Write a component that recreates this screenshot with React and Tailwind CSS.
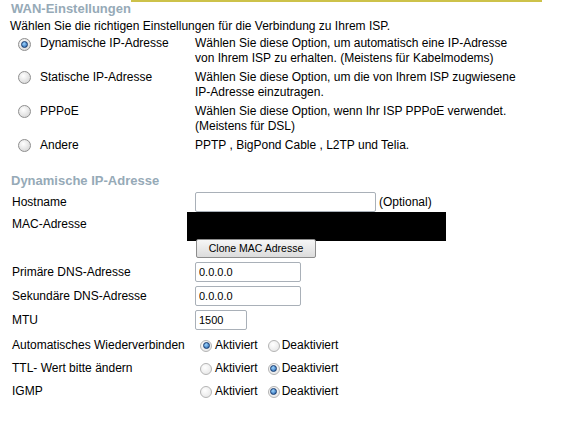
import { useState } from "react";

const FONT = { fontFamily: '"Liberation Sans", Arial, sans-serif' };

function Radio({ checked, small }) {
  return (
    <span
      className={`inline-flex shrink-0 items-center justify-center rounded-full ${
        small
          ? "w-[12px] h-[12px] border border-[#b4b4b4] bg-[radial-gradient(circle_at_40%_35%,#ffffff,#e2e2e2)]"
          : "w-[13px] h-[13px] border border-[#8e8e8e] bg-[radial-gradient(circle_at_40%_35%,#ffffff,#cfcfcf)]"
      }`}
    >
      {checked && (
        <span className="w-[7px] h-[7px] rounded-full border border-[#163a6e] bg-[radial-gradient(circle_at_40%_35%,#9fd6ff,#1b5aa8)]" />
      )}
    </span>
  );
}

const options = [
  {
    label: "Dynamische IP-Adresse",
    desc: ["Wählen Sie diese Option, um automatisch eine IP-Adresse", "von Ihrem ISP zu erhalten. (Meistens für Kabelmodems)"],
  },
  {
    label: "Statische IP-Adresse",
    desc: ["Wählen Sie diese Option, um die von Ihrem ISP zugwiesene", "IP-Adresse einzutragen."],
  },
  {
    label: "PPPoE",
    desc: ["Wählen Sie diese Option, wenn Ihr ISP PPPoE verwendet.", "(Meistens für DSL)"],
  },
  { label: "Andere", desc: ["PPTP , BigPond Cable , L2TP und Telia."] },
];

function Toggle({ label, on }) {
  return (
    <div className="flex items-center h-[23px] pl-[12px]">
      <div className="w-[188px]">{label}</div>
      <Radio small checked={on} />
      <span className="ml-[3px] mr-[10px]">Aktiviert</span>
      <Radio small checked={!on} />
      <span className="ml-[2px]">Deaktiviert</span>
    </div>
  );
}

function TextInput({ w, value }) {
  return (
    <input
      defaultValue={value}
      className={`${w} h-[20px] border border-[#a9b0b8] rounded-[2px] px-[3px] text-[11px] bg-white outline-none`}
      style={FONT}
    />
  );
}

export default function App() {
  const [mode] = useState(0);
  return (
    <div className="w-[571px] h-[438px] bg-white text-[12px] leading-[15px] text-black" style={FONT}>
      <div className="flex items-start w-[542px]">
        <h2 className="pl-[11px] text-[13px] leading-[17px] font-bold text-[#96aab7]">WAN-Einstellungen</h2>
        <div className="flex-1 border-t-2 border-[#cdc24a]" />
      </div>
      <p className="pl-[10px] pt-[2px]">Wählen Sie die richtigen Einstellungen für die Verbindung zu Ihrem ISP.</p>

      {options.map((o, i) => (
        <div key={o.label} className={`flex items-start pl-[18px] ${i === 0 ? "pt-[2px]" : "pt-[4px]"}`}>
          <div className="mt-[1px]">
            <Radio checked={mode === i} />
          </div>
          <div className="ml-[9px] w-[155px]">{o.label}</div>
          <div>
            {o.desc.map((d) => (
              <div key={d}>{d}</div>
            ))}
          </div>
        </div>
      ))}

      <h2 className="mt-[16px] pl-[11px] text-[13px] leading-[17px] font-bold text-[#96aab7]">Dynamische IP-Adresse</h2>

      <div className="flex items-center h-[22px] mt-[2px] pl-[12px]">
        <div className="w-[183px]">Hostname</div>
        <TextInput w="w-[181px]" />
        <span className="ml-[3px]">(Optional)</span>
      </div>

      <div className="flex items-start h-[29px] -mt-[1px] pl-[12px]">
        <div className="w-[183px] pt-[5px]">MAC-Adresse</div>
        <div className="-ml-[8px] w-[259px] h-[29px] bg-black" />
      </div>

      <div className="-mt-[2px] pl-[196px]">
        <button className="h-[19px] w-[120px] border border-[#8c8c8c] rounded-[2px] bg-[linear-gradient(#f6f6f6,#dcdcdc)] text-[10.5px] leading-[17px]">
          Clone MAC Adresse
        </button>
      </div>

      <div className="flex items-center h-[24px] mt-[2px] pl-[12px]">
        <div className="w-[183px]">Primäre DNS-Adresse</div>
        <TextInput w="w-[106px]" value="0.0.0.0" />
      </div>
      <div className="flex items-center h-[24px] pl-[12px]">
        <div className="w-[183px]">Sekundäre DNS-Adresse</div>
        <TextInput w="w-[106px]" value="0.0.0.0" />
      </div>
      <div className="flex items-center h-[24px] pl-[12px]">
        <div className="w-[183px]">MTU</div>
        <TextInput w="w-[52px]" value="1500" />
      </div>

      <div className="mt-[2px]">
        <Toggle label="Automatisches Wiederverbinden" on />
        <Toggle label="TTL- Wert bitte ändern" on={false} />
        <Toggle label="IGMP" on={false} />
      </div>
    </div>
  );
}
